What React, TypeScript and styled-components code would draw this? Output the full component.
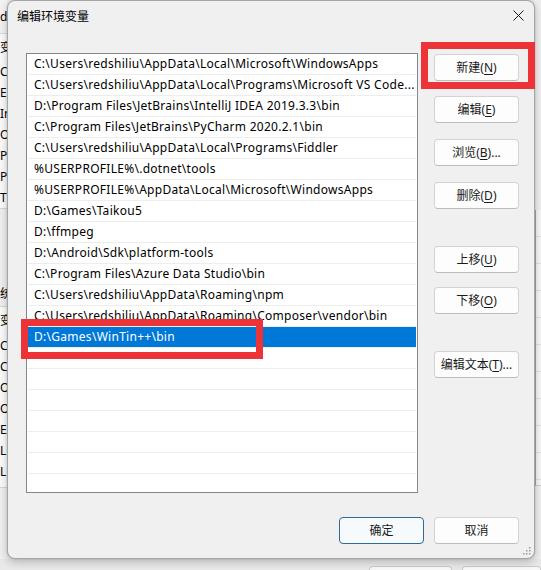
import React from "react";
import styled, { createGlobalStyle } from "styled-components";

const UI_FONT = `"Noto Sans", "Noto Sans CJK SC", sans-serif`;

const Global = createGlobalStyle`
  html, body { margin: 0; padding: 0; }
  body {
    width: 541px;
    height: 570px;
    overflow: hidden;
    background: #ececec;
    font-family: ${UI_FONT};
    font-size: 12px;
    color: #000;
  }
`;

const Page = styled.div`
  width: 541px;
  height: 570px;
  display: flex;
  flex-direction: column;
  overflow: hidden;
  background: #ececec;
`;

const Stage = styled.div`
  display: flex;
  height: 559px;
  flex: none;
`;

/* ---------- background window slivers ---------- */
const LeftStrip = styled.aside`
  width: 7px;
  flex: none;
  overflow: hidden;
  display: flex;
  flex-direction: column;
  background: #f0f0f0;
  white-space: nowrap;
  font-size: 12px;
`;

const StripBar = styled.div`
  height: 33px;
  line-height: 33px;
  border-bottom: 1px solid #d9d9d9;
  background: #f3f3f3;
`;

const StripList = styled.div<{ $pad?: number }>`
  display: flex;
  flex-direction: column;
  background: #fbfbfb;
  border-bottom: 1px solid #d6d6d6;
  padding-bottom: ${(p) => p.$pad ?? 0}px;
`;

const StripHeader = styled.div<{ $h: number }>`
  height: ${(p) => p.$h}px;
  line-height: ${(p) => p.$h}px;
`;

const StripRow = styled.div`
  height: 21px;
  line-height: 21px;
`;

const StripGap = styled.div<{ $h: number }>`
  height: ${(p) => p.$h}px;
  flex: none;
`;

const StripLabel = styled.div`
  height: 23px;
  line-height: 22px;
  margin-left: -12px;
  border-bottom: 1px solid #d6d6d6;
`;

const RightStrip = styled.aside`
  flex: 1;
  display: flex;
  flex-direction: column;
  background: #efefef;
`;

const RightList = styled.div`
  margin-top: 210px;
  height: 275px;
  background: #f7f7f7;
  border-left: 1px solid #a8a8a8;
  border-bottom: 1px solid #cfcfcf;
  display: flex;
  flex-direction: column;
`;

const RightRow = styled.div`
  height: 26px;
  border-bottom: 1px solid #e2e2e2;
`;

const BottomStrip = styled.div`
  flex: 1;
  display: flex;
  gap: 10px;
  padding-left: 369px;
  background: #e9e9e9;
`;

const GhostButton = styled.div<{ $w: number }>`
  width: ${(p) => p.$w}px;
  margin-top: 7px;
  border: 1px solid #cdcdcd;
  border-bottom: none;
  border-radius: 4px 4px 0 0;
  background: #f9f9f9;
`;

/* ---------- dialog ---------- */
const Dialog = styled.section`
  position: relative;
  z-index: 1;
  width: 528px;
  height: 559px;
  flex: none;
  box-sizing: border-box;
  display: flex;
  flex-direction: column;
  background: #f0f0f0;
  border: 1px solid #a6a6a6;
  border-radius: 8px;
  box-shadow: 0 3px 10px rgba(0, 0, 0, 0.22), 0 0 2px rgba(0, 0, 0, 0.18);
`;

const TitleBar = styled.header`
  height: 29px;
  flex: none;
  display: flex;
  align-items: center;
  justify-content: space-between;
  padding: 0 10px 0 9px;
`;

const Title = styled.h1`
  margin: 0;
  font-family: "Noto Sans CJK SC", sans-serif;
  font-size: 12px;
  font-weight: 400;
  color: #000;
  line-height: 16px;
`;

const CloseIcon = styled.svg`
  width: 11px;
  height: 11px;
  display: block;
`;

const Body = styled.div`
  display: flex;
  padding: 23px 15px 0 18px;
`;

const ListBox = styled.div`
  position: relative;
  width: 392px;
  height: 440px;
  flex: none;
  box-sizing: border-box;
  border: 1px solid #828790;
  background: #ffffff;
`;

const RowList = styled.ul`
  list-style: none;
  margin: 0;
  padding: 0;
  height: 100%;
  overflow: hidden;
`;

const Row = styled.li<{ $selected?: boolean }>`
  height: 20px;
  line-height: 20px;
  margin: 0 1px;
  padding-left: 6px;
  border-bottom: 1px solid #ededed;
  background: ${(p) => (p.$selected ? "#0078d7" : "transparent")};
  color: ${(p) => (p.$selected ? "#ffffff" : "#000000")};
  white-space: nowrap;
  overflow: hidden;
  font-size: 12px;
  letter-spacing: 0.28px;
`;

const SideButtons = styled.div`
  width: 85px;
  margin-left: auto;
  padding-top: 1px;
  display: flex;
  flex-direction: column;
`;

const Button = styled.button<{ $gap?: number; $default?: boolean }>`
  position: relative;
  width: 85px;
  height: 27px;
  flex: none;
  margin-top: ${(p) => p.$gap ?? 0}px;
  box-sizing: border-box;
  display: flex;
  align-items: center;
  justify-content: center;
  padding: 0;
  border-radius: 4px;
  border: 1px solid ${(p) => (p.$default ? "#2f6a93" : "#d3d3d3")};
  border-bottom-color: ${(p) => (p.$default ? "#2f6a93" : "#bdbdbd")};
  background: ${(p) => (p.$default ? "#f7fafc" : "#fdfdfd")};
  color: #1a1a1a;
  font-family: ${UI_FONT};
  font-size: 12px;
  line-height: 16px;
`;

const Key = styled.span`
  text-decoration: underline;
  text-underline-offset: 2px;
  text-decoration-thickness: 1px;
`;

const Footer = styled.div`
  display: flex;
  justify-content: flex-end;
  gap: 10px;
  padding: 24px 15px 0;
`;

const NewCallout = styled.span`
  position: absolute;
  left: -14px;
  top: -13px;
  width: 114px;
  height: 47px;
  box-sizing: border-box;
  border: 7px solid #ec3338;
  pointer-events: none;
`;

const RowCallout = styled.span`
  position: absolute;
  left: -6px;
  top: 265px;
  width: 242px;
  height: 40px;
  box-sizing: border-box;
  border: 7px solid #ec3338;
  pointer-events: none;
`;

const Grip = styled.svg`
  position: absolute;
  right: 3px;
  bottom: 3px;
  width: 8px;
  height: 8px;
`;

const paths = [
  "C:\\Users\\redshiliu\\AppData\\Local\\Microsoft\\WindowsApps",
  "C:\\Users\\redshiliu\\AppData\\Local\\Programs\\Microsoft VS Code...",
  "D:\\Program Files\\JetBrains\\IntelliJ IDEA 2019.3.3\\bin",
  "C:\\Program Files\\JetBrains\\PyCharm 2020.2.1\\bin",
  "C:\\Users\\redshiliu\\AppData\\Local\\Programs\\Fiddler",
  "%USERPROFILE%\\.dotnet\\tools",
  "%USERPROFILE%\\AppData\\Local\\Microsoft\\WindowsApps",
  "D:\\Games\\Taikou5",
  "D:\\ffmpeg",
  "D:\\Android\\Sdk\\platform-tools",
  "C:\\Program Files\\Azure Data Studio\\bin",
  "C:\\Users\\redshiliu\\AppData\\Roaming\\npm",
  "C:\\Users\\redshiliu\\AppData\\Roaming\\Composer\\vendor\\bin",
  "D:\\Games\\WinTin++\\bin",
];

const EMPTY_ROWS = 8;
const userVars = ["ChocolateyInstall", "ElectronMirror", "IntelliJ IDEA", "OneDrive", "Path", "PyCharm", "TEMP"];
const sysVars = ["ChocolateyInstall", "ComSpec", "OneDrive", "OXYGEN", "EA", "LUA_PATH", "LUA_CPATH"];

export default function App() {
  return (
    <Page>
      <Global />
      <Stage>
        <LeftStrip>
          <StripBar>ds</StripBar>
          <StripList>
            <StripHeader $h={27}>变量</StripHeader>
            {userVars.map((v) => (
              <StripRow key={v}>{v}</StripRow>
            ))}
          </StripList>
          <StripGap $h={74} />
          <StripLabel>系统变量(S)</StripLabel>
          <StripList $pad={5}>
            <StripHeader $h={28}>变量</StripHeader>
            {sysVars.map((v) => (
              <StripRow key={v}>{v}</StripRow>
            ))}
          </StripList>
        </LeftStrip>

        <Dialog>
          <TitleBar>
            <Title>编辑环境变量</Title>
            <CloseIcon viewBox="0 0 11 11">
              <path d="M0.5 0.5 L10.5 10.5 M10.5 0.5 L0.5 10.5" stroke="#1a1a1a" strokeWidth="1" fill="none" />
            </CloseIcon>
          </TitleBar>

          <Body>
            <ListBox>
              <RowList>
                {paths.map((p, i) => (
                  <Row key={p} $selected={i === paths.length - 1}>
                    {p}
                  </Row>
                ))}
                {Array.from({ length: EMPTY_ROWS }, (_, i) => (
                  <Row key={`empty-${i}`} />
                ))}
              </RowList>
              <RowCallout />
            </ListBox>

            <SideButtons>
              <Button>
                新建(<Key>N</Key>)
                <NewCallout />
              </Button>
              <Button $gap={15}>
                编辑(<Key>E</Key>)
              </Button>
              <Button $gap={16}>
                浏览(<Key>B</Key>)...
              </Button>
              <Button $gap={16}>
                删除(<Key>D</Key>)
              </Button>
              <Button $gap={37}>
                上移(<Key>U</Key>)
              </Button>
              <Button $gap={14}>
                下移(<Key>O</Key>)
              </Button>
              <Button $gap={37}>
                编辑文本(<Key>T</Key>)...
              </Button>
            </SideButtons>
          </Body>

          <Footer>
            <Button $default>确定</Button>
            <Button>取消</Button>
          </Footer>

          <Grip viewBox="0 0 8 8">
            <g fill="#9a9a9a">
              <rect x="6" y="0" width="1.5" height="1.5" />
              <rect x="3" y="3" width="1.5" height="1.5" />
              <rect x="6" y="3" width="1.5" height="1.5" />
              <rect x="0" y="6" width="1.5" height="1.5" />
              <rect x="3" y="6" width="1.5" height="1.5" />
              <rect x="6" y="6" width="1.5" height="1.5" />
            </g>
          </Grip>
        </Dialog>

        <RightStrip>
          <RightList>
            {Array.from({ length: 10 }, (_, i) => (
              <RightRow key={i} />
            ))}
          </RightList>
        </RightStrip>
      </Stage>
      <BottomStrip>
        <GhostButton $w={85} />
        <GhostButton $w={80} />
      </BottomStrip>
    </Page>
  );
}
